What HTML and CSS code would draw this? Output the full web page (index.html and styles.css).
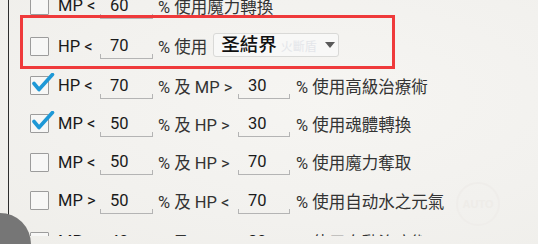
FILE: index.html
```html
<!DOCTYPE html>
<html lang="zh-Hant">
<head>
<meta charset="utf-8">
<link rel="stylesheet" href="styles.css">
</head>
<body>
<div class="screen">
  <div class="watermark">AUTO</div>
  <div class="panel">
    <div class="list">
      <div class="row first">
        <span class="cb"></span>
        <span class="lbl">MP &lt;</span>
        <span class="inp">60</span>
        <span class="txt">% 使用魔力轉換</span>
      </div>
      <div class="row hl">
        <span class="cb"></span>
        <span class="lbl">HP &lt;</span>
        <span class="inp">70</span>
        <span class="txt">% 使用</span>
        <span class="select"><span class="sel-val">圣結界</span><span class="ghost">火斷盾</span><span class="arrow"></span></span>
      </div>
      <div class="row">
        <span class="cb on"><svg class="tick" viewBox="0 0 24 24" width="24" height="24"><path d="M3 10.5 L8 16.5 L21.5 1.5" fill="none" stroke="#1e98d6" stroke-width="3.6" stroke-linecap="round" stroke-linejoin="round"/></svg></span>
        <span class="lbl">HP &lt;</span>
        <span class="inp">70</span>
        <span class="mid">% 及 MP &gt;</span>
        <span class="inp inp2">30</span>
        <span class="tail">% 使用高級治療術</span>
      </div>
      <div class="row">
        <span class="cb on"><svg class="tick" viewBox="0 0 24 24" width="24" height="24"><path d="M3 10.5 L8 16.5 L21.5 1.5" fill="none" stroke="#1e98d6" stroke-width="3.6" stroke-linecap="round" stroke-linejoin="round"/></svg></span>
        <span class="lbl">MP &lt;</span>
        <span class="inp">50</span>
        <span class="mid">% 及 HP &gt;</span>
        <span class="inp inp2">30</span>
        <span class="tail">% 使用魂體轉換</span>
      </div>
      <div class="row">
        <span class="cb"></span>
        <span class="lbl">MP &lt;</span>
        <span class="inp">50</span>
        <span class="mid">% 及 HP &gt;</span>
        <span class="inp inp2">70</span>
        <span class="tail">% 使用魔力奪取</span>
      </div>
      <div class="row">
        <span class="cb"></span>
        <span class="lbl">MP &gt;</span>
        <span class="inp">50</span>
        <span class="mid">% 及 HP &lt;</span>
        <span class="inp inp2">70</span>
        <span class="tail">% 使用自动水之元氣</span>
      </div>
      <div class="row last">
        <span class="cb"></span>
        <span class="lbl">MP &lt;</span>
        <span class="inp">40</span>
        <span class="mid">% 及 HP &gt;</span>
        <span class="inp inp2">80</span>
        <span class="tail">% 使用自動治療術</span>
      </div>
    </div>
  </div>
  <div class="mark"></div>
  <div class="fab"></div>
</div>
</body>
</html>
```

FILE: styles.css
```css
* { box-sizing: border-box; }
html, body { margin: 0; padding: 0; }
body {
  background: #f3f2ef;
  font-family: Roboto, "Noto Sans CJK TC", "Noto Sans", sans-serif;
  color: #222;
}
.screen {
  position: relative;
  width: 538px;
  height: 244px;
  overflow: hidden;
  background: radial-gradient(ellipse at 60% 40%, #f6f5f2 0%, #f2f1ee 60%, #efeeea 100%);
}
.panel {
  margin-left: 8px;
  height: 233px;
  border-left: 1px solid #2e2e2e;
}
.list {
  height: 236px;
  overflow: hidden;
  padding-left: 21px;
}
.list > .row:first-child { margin-top: -14.5px; }
.row {
  display: flex;
  align-items: center;
  height: 38.33px;
  font-size: 16.5px;
}
.row.first { height: 40px; }
.row.hl { height: 41px; }
.row.last { margin-top: 3px; }
.cb {
  position: relative;
  flex: none;
  width: 19px;
  height: 19px;
  border: 1.5px solid #9c9c9c;
  border-radius: 1px;
  background: #f7f7f6;
  margin-right: 9px;
}
.tick {
  position: absolute;
  left: 0px;
  top: -4px;
}
.lbl {
  width: 42px;
  flex: none;
  color: #1a1a1a;
  white-space: nowrap;
}
.inp {
  position: relative;
  flex: none;
  width: 53px;
  height: 26px;
  padding-left: 10px;
  line-height: 26px;
  color: #1a1a1a;
  border-bottom: 1px solid #b4b4b4;
}
.inp::before, .inp::after {
  content: "";
  position: absolute;
  bottom: 0;
  width: 1px;
  height: 4px;
  background: #b4b4b4;
}
.inp::before { left: 0; }
.inp::after { right: 0; }
.inp2 { width: 52px; }
.txt, .mid, .tail {
  color: #333;
  white-space: nowrap;
}
.txt { margin-left: 5px; }
.mid { margin-left: 5px; width: 80px; flex: none; }
.tail { margin-left: 6px; }
.select {
  flex: none;
  display: flex;
  align-items: center;
  margin-left: 6px;
  width: 126px;
  height: 24px;
  border: 1px solid #d9d9d7;
  border-radius: 3px;
  background: #f8f8f7;
  padding-left: 7px;
  margin-top: -2px;
  white-space: nowrap;
  overflow: hidden;
}
.sel-val {
  flex: none;
  font-size: 18.5px;
  font-weight: 500;
  color: #111;
  line-height: 22px;
}
.ghost {
  flex: none;
  font-size: 12px;
  color: #e4e6ea;
  margin-left: 4px;
}
.arrow {
  flex: none;
  margin-left: auto;
  margin-right: 3px;
  width: 0;
  height: 0;
  border-left: 5px solid transparent;
  border-right: 5px solid transparent;
  border-top: 6px solid #5a5a5a;
}
.mark {
  position: absolute;
  left: 20px;
  top: 15px;
  width: 375px;
  height: 54px;
  border: 3px solid #ef3a3b;
}
.fab {
  position: absolute;
  left: -31px;
  top: 213px;
  width: 62px;
  height: 62px;
  border-radius: 50%;
  background: #767676;
}
.watermark {
  position: absolute;
  left: 456px;
  top: 182px;
  width: 44px;
  height: 44px;
  border-radius: 50%;
  border: 2px solid #efedea;
  color: #eeece8;
  font-family: "Liberation Sans", sans-serif;
  font-size: 11px;
  font-weight: bold;
  display: flex;
  align-items: center;
  justify-content: center;
}
```
